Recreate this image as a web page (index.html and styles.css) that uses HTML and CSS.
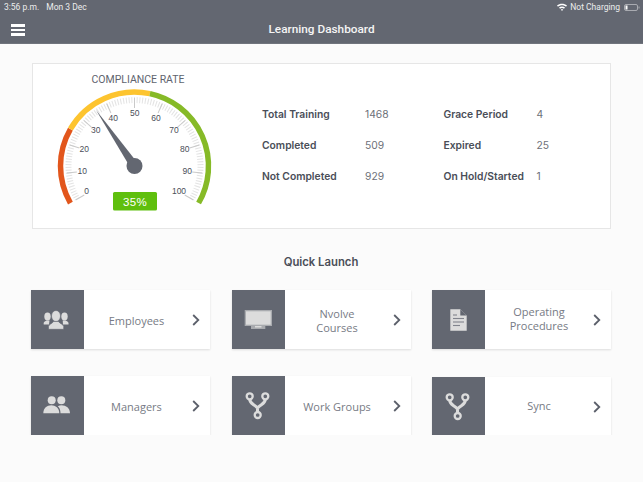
FILE: index.html
```html
<!DOCTYPE html>
<html lang="en">
<head>
    <meta charset="UTF-8">
    <meta name="viewport" content="width=device-width, initial-scale=1.0">
    <title>Learning Dashboard</title>
    <link rel="stylesheet" href="styles.css">
</head>
<body>
    <header class="topbar">
        <div class="status">
            <span class="status-time">3:56 p.m.</span>
            <span class="status-date">Mon 3 Dec</span>
            <span class="status-right">
                <svg class="wifi" viewBox="0 0 10 8" width="10" height="8">
                    <path d="M0 2.6C2.8 0 7.2 0 10 2.6L9 3.7C6.700 1.700 3.300 1.700 1 3.700Z" fill="#fff"/>
                    <path d="M2 4.600C3.700 3.100 6.300 3.100 8 4.600L7 5.700C5.800 4.700 4.200 4.700 3 5.700Z" fill="#fff"/>
                    <path d="M3.800 6.500C4.500 6 5.500 6 6.200 6.500L5 8Z" fill="#fff"/>
                </svg>
                <span>Not Charging</span>
                <svg class="battery" viewBox="0 0 16 7" width="16" height="7">
                    <rect x="0.500" y="0.500" width="13" height="6" rx="1.500" fill="none" stroke="#a9abb1"/>
                    <rect x="1.500" y="1.500" width="2" height="4" fill="#fff"/>
                    <rect x="14.500" y="2.500" width="1" height="2" fill="#a9abb1"/>
                </svg>
            </span>
        </div>
        <div class="nav">
            <div class="hamburger"><span></span><span></span><span></span></div>
            <h1>Learning Dashboard</h1>
        </div>
    </header>

    <main class="content">
        <section class="panel">
            <div class="gauge">
                <div class="gauge-title">COMPLIANCE RATE</div>
                <svg class="gauge-svg" viewBox="0 0 176 130" width="176" height="130">
                    <!-- minor ticks -->
                    <path d="M31.300 112A66 66 0 1 1 145.700 112" pathLength="100" fill="none" stroke="#e4e4e4" stroke-width="6" stroke-dasharray="0.380 0.620" stroke-dashoffset="0.190"/>
                    <!-- major ticks -->
                    <g stroke="#c9c9c9" stroke-width="1">
                        <line x1="88.500" y1="11" x2="88.500" y2="21" transform="rotate(-120 88.500 79)"/>
                        <line x1="88.500" y1="11" x2="88.500" y2="21" transform="rotate(-96 88.500 79)"/>
                        <line x1="88.500" y1="11" x2="88.500" y2="21" transform="rotate(-72 88.500 79)"/>
                        <line x1="88.500" y1="11" x2="88.500" y2="21" transform="rotate(-48 88.500 79)"/>
                        <line x1="88.500" y1="11" x2="88.500" y2="21" transform="rotate(-24 88.500 79)"/>
                        <line x1="88.500" y1="11" x2="88.500" y2="21"/>
                        <line x1="88.500" y1="11" x2="88.500" y2="21" transform="rotate(24 88.500 79)"/>
                        <line x1="88.500" y1="11" x2="88.500" y2="21" transform="rotate(48 88.500 79)"/>
                        <line x1="88.500" y1="11" x2="88.500" y2="21" transform="rotate(72 88.500 79)"/>
                        <line x1="88.500" y1="11" x2="88.500" y2="21" transform="rotate(96 88.500 79)"/>
                        <line x1="88.500" y1="11" x2="88.500" y2="21" transform="rotate(120 88.500 79)"/>
                    </g>
                    <!-- coloured bands -->
                    <g fill="none" stroke-width="5.500">
                        <path d="M24.410 116A74 74 0 0 1 24.410 42" stroke="#e2561c"/>
                        <path d="M24.410 42A74 74 0 0 1 103.890 6.620" stroke="#fdc42f"/>
                        <path d="M103.890 6.620A74 74 0 0 1 152.590 116" stroke="#86ba27"/>
                    </g>
                    <g class="gauge-labels">
                        <text x="40.700" y="107.300">0</text>
                        <text x="36.300" y="86.700">10</text>
                        <text x="38.300" y="65.300">20</text>
                        <text x="49.700" y="46.300">30</text>
                        <text x="67.300" y="33.700">40</text>
                        <text x="88.700" y="29">50</text>
                        <text x="110" y="33.700">60</text>
                        <text x="128" y="46.300">70</text>
                        <text x="138.700" y="65.300">80</text>
                        <text x="141.300" y="86.700">90</text>
                        <text x="133" y="107.300">100</text>
                    </g>
                    <polygon points="50,23 92,76.500 85,81.500" fill="#636771"/>
                    <circle cx="88.500" cy="79" r="8" fill="#636771"/>
                    <rect x="67" y="105" width="44" height="18.500" rx="1.500" fill="#5fbf0e"/>
                    <text class="gauge-value" x="89" y="118.500">35%</text>
                </svg>
            </div>
            <dl class="stats">
                <dt>Total Training</dt><dd>1468</dd><dt>Grace Period</dt><dd>4</dd>
                <dt>Completed</dt><dd>509</dd><dt>Expired</dt><dd>25</dd>
                <dt>Not Completed</dt><dd>929</dd><dt>On Hold/Started</dt><dd>1</dd>
            </dl>
        </section>

        <h2 class="section-title">Quick Launch</h2>

        <section class="launch-grid">
            <a class="tile">
                <span class="tile-icon">
                    <svg viewBox="0 0 53 59" width="53" height="59">
                        <g fill="#dcdcdc">
                            <ellipse cx="16.500" cy="26.500" rx="3.200" ry="4"/>
                            <ellipse cx="33.500" cy="26.500" rx="3.200" ry="4"/>
                            <path d="M12.700 34.500V33C12.700 31.800 14.500 31.300 15.500 30.500H18.500L18 34.500Z"/>
                            <path d="M37.500 34.500V33C37.500 31.800 35.700 31.300 34.700 30.500H31.700L32 34.500Z"/>
                            <path d="M17.500 39.300V36.500C17.500 34.500 21.500 33.500 22.500 31.500H27.500C28.500 33.500 32.700 34.500 32.700 36.500V39.300Z" stroke="#636771" stroke-width="0.600"/>
                            <ellipse cx="25" cy="26" rx="4.500" ry="5.500" stroke="#636771" stroke-width="0.600"/>
                        </g>
                    </svg>
                </span>
                <span class="tile-label">Employees</span>
                <svg class="chevron" viewBox="0 0 8 12" width="8" height="12"><path d="M1.200 1L6.300 6L1.200 11" fill="none" stroke="#5c606b" stroke-width="1.800"/></svg>
            </a>
            <a class="tile">
                <span class="tile-icon">
                    <svg viewBox="0 0 53 59" width="53" height="59">
                        <rect x="12.700" y="20" width="27.300" height="16" fill="#a9abaf"/>
                        <rect x="14" y="21.300" width="24.700" height="13.400" fill="#dcdcdc"/>
                        <rect x="19" y="36" width="14.300" height="3" fill="#a9abaf"/>
                        <rect x="23" y="36" width="6.500" height="1.500" fill="#dcdcdc"/>
                    </svg>
                </span>
                <span class="tile-label">Nvolve<br>Courses</span>
                <svg class="chevron" viewBox="0 0 8 12" width="8" height="12"><path d="M1.200 1L6.300 6L1.200 11" fill="none" stroke="#5c606b" stroke-width="1.800"/></svg>
            </a>
            <a class="tile">
                <span class="tile-icon">
                    <svg viewBox="0 0 53 59" width="53" height="59">
                        <path d="M18.300 19.300H28.300L34.700 25.500V40.700H18.300Z" fill="#dcdcdc"/>
                        <path d="M28.300 19.300L34.700 25.500H28.300Z" fill="#636771"/>
                        <g stroke="#81848d" stroke-width="1.100">
                            <line x1="21" y1="25" x2="25" y2="25"/>
                            <line x1="21" y1="28.500" x2="32" y2="28.500"/>
                            <line x1="21" y1="32" x2="32" y2="32"/>
                            <line x1="21" y1="35.500" x2="28" y2="35.500"/>
                        </g>
                    </svg>
                </span>
                <span class="tile-label tile-label-wide">Operating<br>Procedures</span>
                <svg class="chevron" viewBox="0 0 8 12" width="8" height="12"><path d="M1.200 1L6.300 6L1.200 11" fill="none" stroke="#5c606b" stroke-width="1.800"/></svg>
            </a>
            <a class="tile">
                <span class="tile-icon">
                    <svg viewBox="0 0 53 59" width="53" height="59">
                        <g fill="#dcdcdc">
                            <circle cx="20.700" cy="24.300" r="4"/>
                            <circle cx="30.300" cy="24.300" r="4"/>
                            <path d="M12.300 37.300C12.300 32 16 29.300 20.300 29.300C24.500 29.300 28.300 32 28.300 37.300Z"/>
                            <path d="M29.500 37.300C29.500 34 28.500 31.800 26.800 30.300C28 29.600 29.200 29.300 30.500 29.300C35 29.300 39 32 39 37.300Z"/>
                        </g>
                    </svg>
                </span>
                <span class="tile-label">Managers</span>
                <svg class="chevron" viewBox="0 0 8 12" width="8" height="12"><path d="M1.200 1L6.300 6L1.200 11" fill="none" stroke="#5c606b" stroke-width="1.800"/></svg>
            </a>
            <a class="tile">
                <span class="tile-icon">
                    <svg viewBox="0 0 53 59" width="53" height="59">
                        <g fill="none" stroke="#dcdcdc" stroke-width="2.300">
                            <circle cx="17.700" cy="20.300" r="3"/>
                            <circle cx="33.300" cy="20.300" r="3"/>
                            <circle cx="25.700" cy="39" r="3"/>
                        </g>
                        <path d="M17.700 23C17.700 28 22 28 25.500 32V36M33.300 23C33.300 28 29 28 25.500 32" fill="none" stroke="#dcdcdc" stroke-width="3"/>
                    </svg>
                </span>
                <span class="tile-label">Work Groups</span>
                <svg class="chevron" viewBox="0 0 8 12" width="8" height="12"><path d="M1.200 1L6.300 6L1.200 11" fill="none" stroke="#5c606b" stroke-width="1.800"/></svg>
            </a>
            <a class="tile tile-sync">
                <span class="tile-icon">
                    <svg viewBox="0 0 53 59" width="53" height="59">
                        <g fill="none" stroke="#dcdcdc" stroke-width="2.300">
                            <circle cx="17.700" cy="20.300" r="3"/>
                            <circle cx="33.300" cy="20.300" r="3"/>
                            <circle cx="25.700" cy="39" r="3"/>
                        </g>
                        <path d="M17.700 23C17.700 28 22 28 25.500 32V36M33.300 23C33.300 28 29 28 25.500 32" fill="none" stroke="#dcdcdc" stroke-width="3"/>
                    </svg>
                </span>
                <span class="tile-label tile-label-wide">Sync</span>
                <svg class="chevron" viewBox="0 0 8 12" width="8" height="12"><path d="M1.200 1L6.300 6L1.200 11" fill="none" stroke="#5c606b" stroke-width="1.800"/></svg>
            </a>
        </section>
    </main>
</body>
</html>
```

FILE: styles.css
```css
* {
    box-sizing: border-box;
}
body {
    margin: 0;
    background: #fbfbfb;
    font-family: Inter, "Liberation Sans", sans-serif;
    color: #4a4e58;
}
.topbar {
    height: 44px;
    background: #636771;
    color: white;
    border-bottom: 1px solid #70747d;
}
.status {
    display: flex;
    align-items: center;
    height: 14px;
    padding: 0 3px 0 4px;
    font-family: Roboto, sans-serif;
    font-size: 8.5px;
    color: #eceded;
}
.status-date {
    margin-left: 7px;
}
.status-right {
    margin-left: auto;
    display: flex;
    align-items: center;
    gap: 4px;
}
.wifi {
    margin-right: -1px;
}
.nav {
    position: relative;
    height: 29px;
    display: flex;
    align-items: center;
    justify-content: center;
}
.nav h1 {
    margin: 0;
    font-family: Roboto, sans-serif;
    font-size: 11.8px;
    font-weight: 500;
    color: #f5f5f5;
}
.hamburger {
    position: absolute;
    left: 11px;
    top: 10px;
    width: 14px;
    display: flex;
    flex-direction: column;
    gap: 2px;
}
.hamburger span {
    height: 2.500px;
    background: white;
}
.content {
    padding: 19px 0 0 31px;
}
.panel {
    width: 579px;
    height: 166px;
    margin-left: 0.500px;
    display: flex;
    background: white;
    border: 1px solid #e6e6e6;
}
.gauge {
    width: 176px;
    margin-left: 13px;
}
.gauge-title {
    height: 23px;
    padding-top: 9px;
    padding-left: 9px;
    text-align: center;
    font-family: Roboto, sans-serif;
    font-size: 10.500px;
    line-height: 13px;
    color: #60646e;
}
.gauge-svg {
    display: block;
}
.gauge-labels text {
    font-family: "Liberation Sans", sans-serif;
    font-size: 8.500px;
    fill: #4a4e58;
    text-anchor: middle;
}
.gauge-value {
    font-family: "Liberation Sans", sans-serif;
    font-size: 11.500px;
    letter-spacing: 0.300px;
    fill: white;
    text-anchor: middle;
}
.stats {
    margin: 42px 0 0 40.500px;
    display: grid;
    grid-template-columns: 103px 78.500px 93px auto;
    grid-auto-rows: 31.200px;
    font-size: 10.300px;
    line-height: 16px;
}
.stats dt {
    font-weight: 600;
    color: #4a4e58;
}
.stats dd {
    margin: 0;
    color: #6d7078;
}
.section-title {
    margin: 25px 0 20px;
    width: 580px;
    text-align: center;
    font-size: 11.300px;
    line-height: 16px;
    font-weight: 600;
    color: #4a4e58;
}
.launch-grid {
    display: grid;
    grid-template-columns: repeat(3, 179px);
    column-gap: 21.500px;
    row-gap: 27px;
}
.tile {
    height: 59px;
    display: flex;
    align-items: center;
    background: white;
    box-shadow: 0 1px 2px #dcdcdc;
}
.tile-sync {
    position: relative;
    top: 1px;
}
.tile-icon {
    flex: none;
    width: 53px;
    height: 59px;
    background: #636771;
}
.tile-icon svg {
    display: block;
}
.tile-label {
    width: 105px;
    padding-top: 2px;
    text-align: center;
    font-family: "Open Sans", sans-serif;
    font-size: 11px;
    line-height: 14px;
    color: #777b85;
}
.tile-label-wide {
    padding: 0 0 1px 3px;
}
.chevron {
    margin-left: 3px;
}
```
